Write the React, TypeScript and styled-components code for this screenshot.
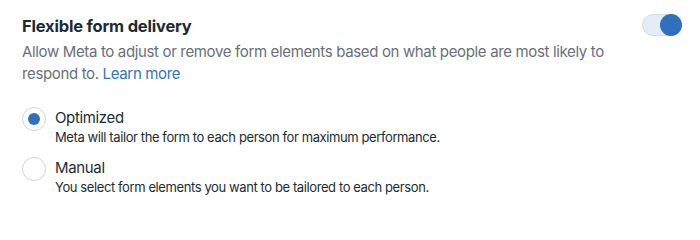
import { type ReactElement, useState } from 'react';
import styled, { createGlobalStyle } from 'styled-components';

const GlobalStyle = createGlobalStyle`
  html, body {
    margin: 0;
    padding: 0;
    background: #ffffff;
  }
  body {
    font-family: Inter, "Noto Sans", "Liberation Sans", sans-serif;
    -webkit-font-smoothing: antialiased;
  }
`;

const Panel = styled.section`
  width: 700px;
  height: 227px;
  box-sizing: border-box;
  padding: 14px 18px 0 22px;
`;

const Header = styled.div`
  display: flex;
  align-items: flex-start;
  justify-content: space-between;
  gap: 16px;
`;

const Title = styled.h2`
  margin: 1px 0 0;
  font-size: 16.5px;
  line-height: 22px;
  font-weight: 700;
  letter-spacing: -0.2px;
  color: #1c2b33;
`;

const Description = styled.p`
  margin: 4px 0 0;
  max-width: 600px;
  font-size: 15px;
  line-height: 22px;
  letter-spacing: -0.35px;
  color: #67707a;
`;

const LearnMore = styled.a`
  color: #2f74c0;
  text-decoration: none;
  cursor: pointer;
`;

const Toggle = styled.button<{ $on: boolean }>`
  flex: none;
  position: relative;
  width: 40px;
  height: 22px;
  padding: 0;
  border-radius: 11px;
  border: 1px solid #d3dbe3;
  background: ${(p) => (p.$on ? '#e3edf7' : '#eef1f4')};
  cursor: pointer;

  &::after {
    content: '';
    position: absolute;
    top: 0;
    ${(p) => (p.$on ? 'right: -1px;' : 'left: -1px;')}
    width: 22px;
    height: 22px;
    margin-top: -1px;
    border-radius: 50%;
    background: ${(p) => (p.$on ? '#2f71bf' : '#ffffff')};
  }
`;

const Options = styled.div`
  display: flex;
  flex-direction: column;
  gap: 12px;
  margin-top: 23px;
`;

const Option = styled.label`
  display: flex;
  align-items: flex-start;
  gap: 9px;
  cursor: pointer;
`;

const Radio = styled.span<{ $checked: boolean }>`
  flex: none;
  width: 24px;
  height: 24px;
  margin-top: -1px;
  box-sizing: border-box;
  border-radius: 50%;
  border: 1px solid #cfd6dd;
  background: #ffffff;
  display: flex;
  align-items: center;
  justify-content: center;

  &::after {
    content: '';
    width: 12px;
    height: 12px;
    border-radius: 50%;
    background: ${(p) => (p.$checked ? '#2f71bf' : 'transparent')};
  }
`;

const OptionText = styled.div`
  display: flex;
  flex-direction: column;
`;

const OptionLabel = styled.span`
  font-size: 15px;
  line-height: 20px;
  letter-spacing: -0.35px;
  color: #1c2b33;
`;

const OptionHint = styled.span`
  font-size: 13px;
  line-height: 18px;
  letter-spacing: -0.4px;
  color: #1c2b33;
`;

const options = [
  {
    id: 'optimized',
    label: 'Optimized',
    hint: 'Meta will tailor the form to each person for maximum performance.',
  },
  {
    id: 'manual',
    label: 'Manual',
    hint: 'You select form elements you want to be tailored to each person.',
  },
];

export default function App(): ReactElement {
  const [enabled, setEnabled] = useState(true);
  const [choice, setChoice] = useState('optimized');

  return (
    <>
      <GlobalStyle />
      <Panel>
        <Header>
          <div>
            <Title>Flexible form delivery</Title>
            <Description>
              Allow Meta to adjust or remove form elements based on what people are most likely to
              respond to. <LearnMore>Learn more</LearnMore>
            </Description>
          </div>
          <Toggle $on={enabled} aria-pressed={enabled} onClick={() => setEnabled(!enabled)} />
        </Header>

        <Options>
          {options.map((o) => (
            <Option key={o.id} onClick={() => setChoice(o.id)}>
              <Radio $checked={choice === o.id} />
              <OptionText>
                <OptionLabel>{o.label}</OptionLabel>
                <OptionHint>{o.hint}</OptionHint>
              </OptionText>
            </Option>
          ))}
        </Options>
      </Panel>
    </>
  );
}
